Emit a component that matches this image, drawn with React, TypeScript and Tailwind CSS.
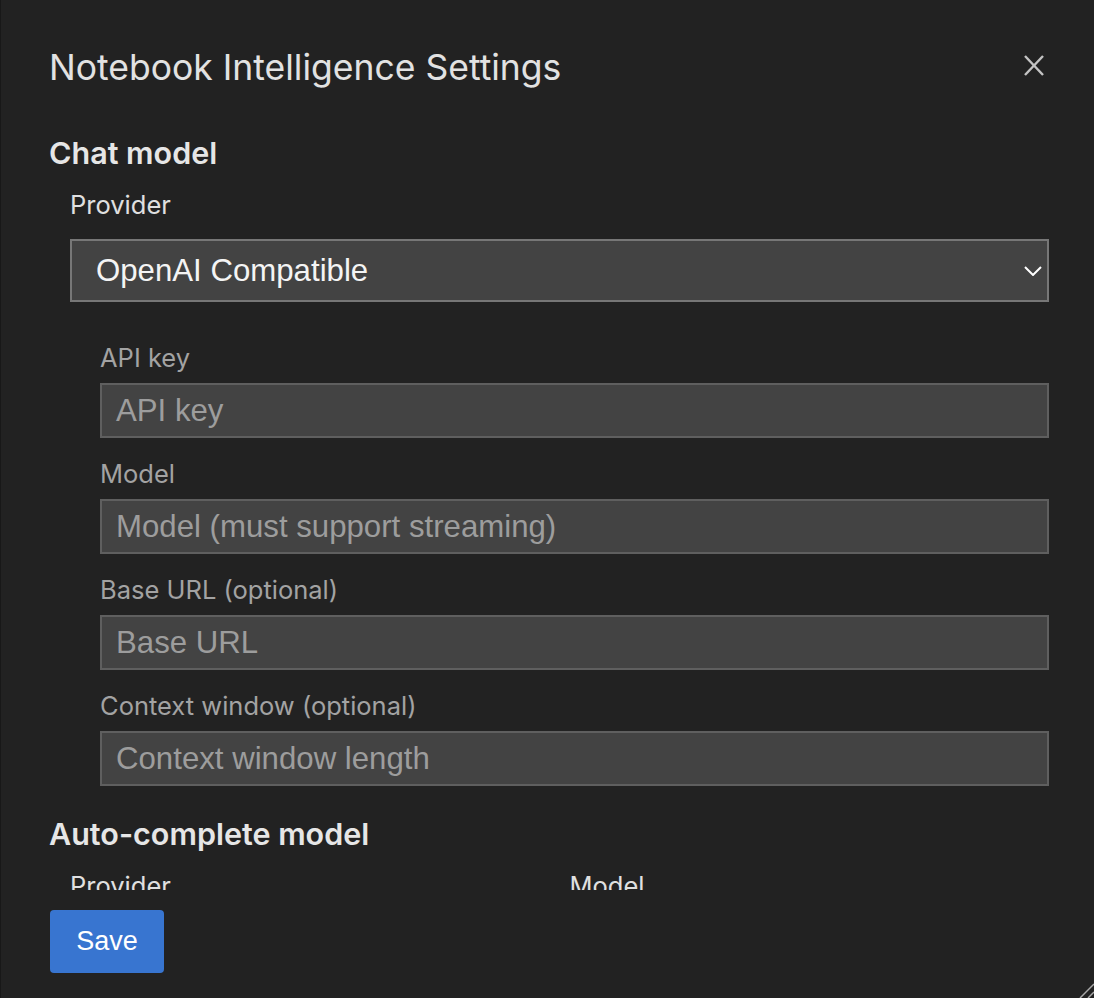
const fields = [
  { label: "API key", placeholder: "API key" },
  { label: "Model", placeholder: "Model (must support streaming)" },
  { label: "Base URL (optional)", placeholder: "Base URL" },
  { label: "Context window (optional)", placeholder: "Context window length" },
];

const ui = "font-['Inter','Noto_Sans',sans-serif]";
const field = "font-['Liberation_Sans',Arial,sans-serif]";

const SettingsDialog = () => {
  return (
    <div className={`relative w-[1094px] h-[998px] bg-[#222222] border-l border-[#181818] flex flex-col overflow-hidden ${ui}`}>
      {/* header */}
      <div className="flex items-start justify-between pl-[48px] pr-[50px] pt-[46px]">
        <h1 className="text-[35.5px] leading-[44px] text-[#e2e2e2] font-normal">Notebook Intelligence Settings</h1>
        <button className="mt-[9px] text-[#c4c4c4]" aria-label="Close">
          <svg width="20" height="21" viewBox="0 0 20 21" fill="none" stroke="currentColor" strokeWidth="2.4">
            <line x1="1" y1="1" x2="19" y2="20" />
            <line x1="19" y1="1" x2="1" y2="20" />
          </svg>
        </button>
      </div>

      {/* scrolling body */}
      <div className="h-[800px] shrink-0 overflow-hidden pl-[48px] pr-[45px] pt-[45px]">
        <h2 className="text-[30.5px] leading-[36px] font-semibold text-[#e6e6e6]">Chat model</h2>

        <div className="pl-[21px] pt-[20px]">
          <label className="block text-[25.5px] leading-[28px] text-[#e0e0e0]">Provider</label>
          <div className="mt-[20px] h-[63px] flex items-center justify-between bg-[#434343] border-2 border-[#777777] pl-[24px] pr-[5px]">
            <span className={`${field} text-[31.2px] pt-[2px] text-[#f4f4f4]`}>OpenAI Compatible</span>
            <svg width="18" height="10" viewBox="0 0 18 10" fill="none" stroke="#ffffff" strokeWidth="2">
              <polyline points="1,1 9,9 17,1" />
            </svg>
          </div>

          <div className="pl-[30px] pt-[42px] flex flex-col gap-[22px]">
            {fields.map((f) => (
              <div key={f.label}>
                <label className="block text-[25.5px] leading-[28px] text-[#a3a3a3]">{f.label}</label>
                <div className="mt-[11px] h-[55px] flex items-center bg-[#434343] border-2 border-[#5f5f5f] pl-[14px]">
                  <span className={`${field} text-[31.2px] pt-[2px] text-[#9d9d9d]`}>{f.placeholder}</span>
                </div>
              </div>
            ))}
          </div>
        </div>

        <h2 className="mt-[30px] text-[30.5px] leading-[36px] font-semibold text-[#e6e6e6]">Auto-complete model</h2>
        <div className="pl-[21px] pt-[20px] grid grid-cols-2 gap-[20px]">
          <label className="block text-[25.5px] leading-[28px] text-[#e0e0e0]">Provider</label>
          <label className="block text-[25.5px] leading-[28px] text-[#e0e0e0]">Model</label>
        </div>
      </div>

      {/* footer */}
      <div className="pl-[49px] pt-[20px]">
        <button className={`${field} w-[114px] h-[63px] rounded-[4px] bg-[#3875d0] text-white text-[27px]`}>Save</button>
      </div>

      {/* resize grip */}
      <svg className="absolute right-0 bottom-0" width="16" height="16" viewBox="0 0 16 16">
        <line x1="16" y1="2" x2="2" y2="16" stroke="#a8a8a8" strokeWidth="1.5" />
        <line x1="16" y1="10" x2="10" y2="16" stroke="#a8a8a8" strokeWidth="1.5" />
      </svg>
    </div>
  );
};

export default function App() {
  return <SettingsDialog />;
}
